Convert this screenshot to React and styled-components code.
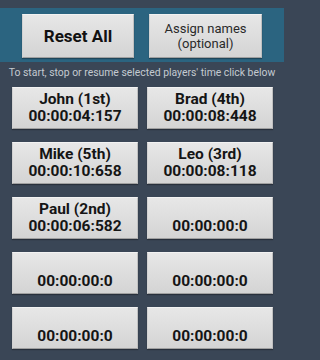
import styled, { createGlobalStyle } from 'styled-components';

const GlobalStyle = createGlobalStyle`
    html, body {
        margin: 0;
        padding: 0;
        background-color: #3a4656;
        font-family: Roboto, "Liberation Sans", sans-serif;
    }
`

const players = [
    { name: 'John (1st)', time: '00:00:04:157' },
    { name: 'Brad (4th)', time: '00:00:08:448' },
    { name: 'Mike (5th)', time: '00:00:10:658' },
    { name: 'Leo (3rd)', time: '00:00:08:118' },
    { name: 'Paul (2nd)', time: '00:00:06:582' },
    { name: '', time: '00:00:00:0' },
    { name: '', time: '00:00:00:0' },
    { name: '', time: '00:00:00:0' },
    { name: '', time: '00:00:00:0' },
    { name: '', time: '00:00:00:0' },
];

export default function App() {
    return (
        <>
            <GlobalStyle />
            <Screen>
                <Header>
                    <TopButton $bold>Reset All</TopButton>
                    <TopButton>Assign names<br />(optional)</TopButton>
                </Header>
                <Hint>To start, stop or resume selected players' time click below</Hint>
                <Grid>
                    {players.map((player, index) => (
                        <PlayerButton key={index}>
                            <Line>{player.name || '\u00a0'}</Line>
                            <Line>{player.time}</Line>
                        </PlayerButton>
                    ))}
                </Grid>
            </Screen>
        </>
    );
}

const Screen = styled.div`
    width: 284px;
    height: 360px;
    overflow: hidden;
    padding-top: 8px;
    box-sizing: border-box;
`

const Header = styled.div`
    background-color: #2b6480;
    height: 54px;
    box-sizing: border-box;
    padding: 6px 22px 4px 22px;
    display: grid;
    grid-template-columns: 112px 113px;
    column-gap: 15px;
`

const buttonLook = `
    background: linear-gradient(#e7e7e7, #d4d4d4);
    border-top: 1px solid #f2f2f2;
    border-left: 1px solid #d2d2d2;
    border-right: 1px solid #c0c0c0;
    border-bottom: 1px solid #a0a0a0;
    box-shadow: 0 1px 1px rgba(0, 0, 0, 0.3);
    box-sizing: border-box;
    color: #151515;
    display: flex;
    flex-direction: column;
    align-items: center;
    justify-content: center;
    text-align: center;
`

const TopButton = styled.div`
    ${buttonLook}
    height: 44px;
    font-size: ${props => (props.$bold ? '17px' : '13px')};
    font-weight: ${props => (props.$bold ? 700 : 400)};
    line-height: ${props => (props.$bold ? '20px' : '15px')};
    color: ${props => (props.$bold ? '#111' : '#2a2a2a')};
`

const Hint = styled.div`
    height: 25px;
    line-height: 21px;
    text-align: center;
    color: #c4cad1;
    font-size: 10.4px;
    white-space: nowrap;
`

const Grid = styled.div`
    display: grid;
    grid-template-columns: 126px 126px;
    column-gap: 9px;
    row-gap: 13px;
    padding-left: 12px;
`

const PlayerButton = styled.div`
    ${buttonLook}
    height: 42px;
    font-size: 15.5px;
    font-weight: 700;
`

const Line = styled.span`
    display: block;
    height: 17px;
    line-height: 17px;
`
